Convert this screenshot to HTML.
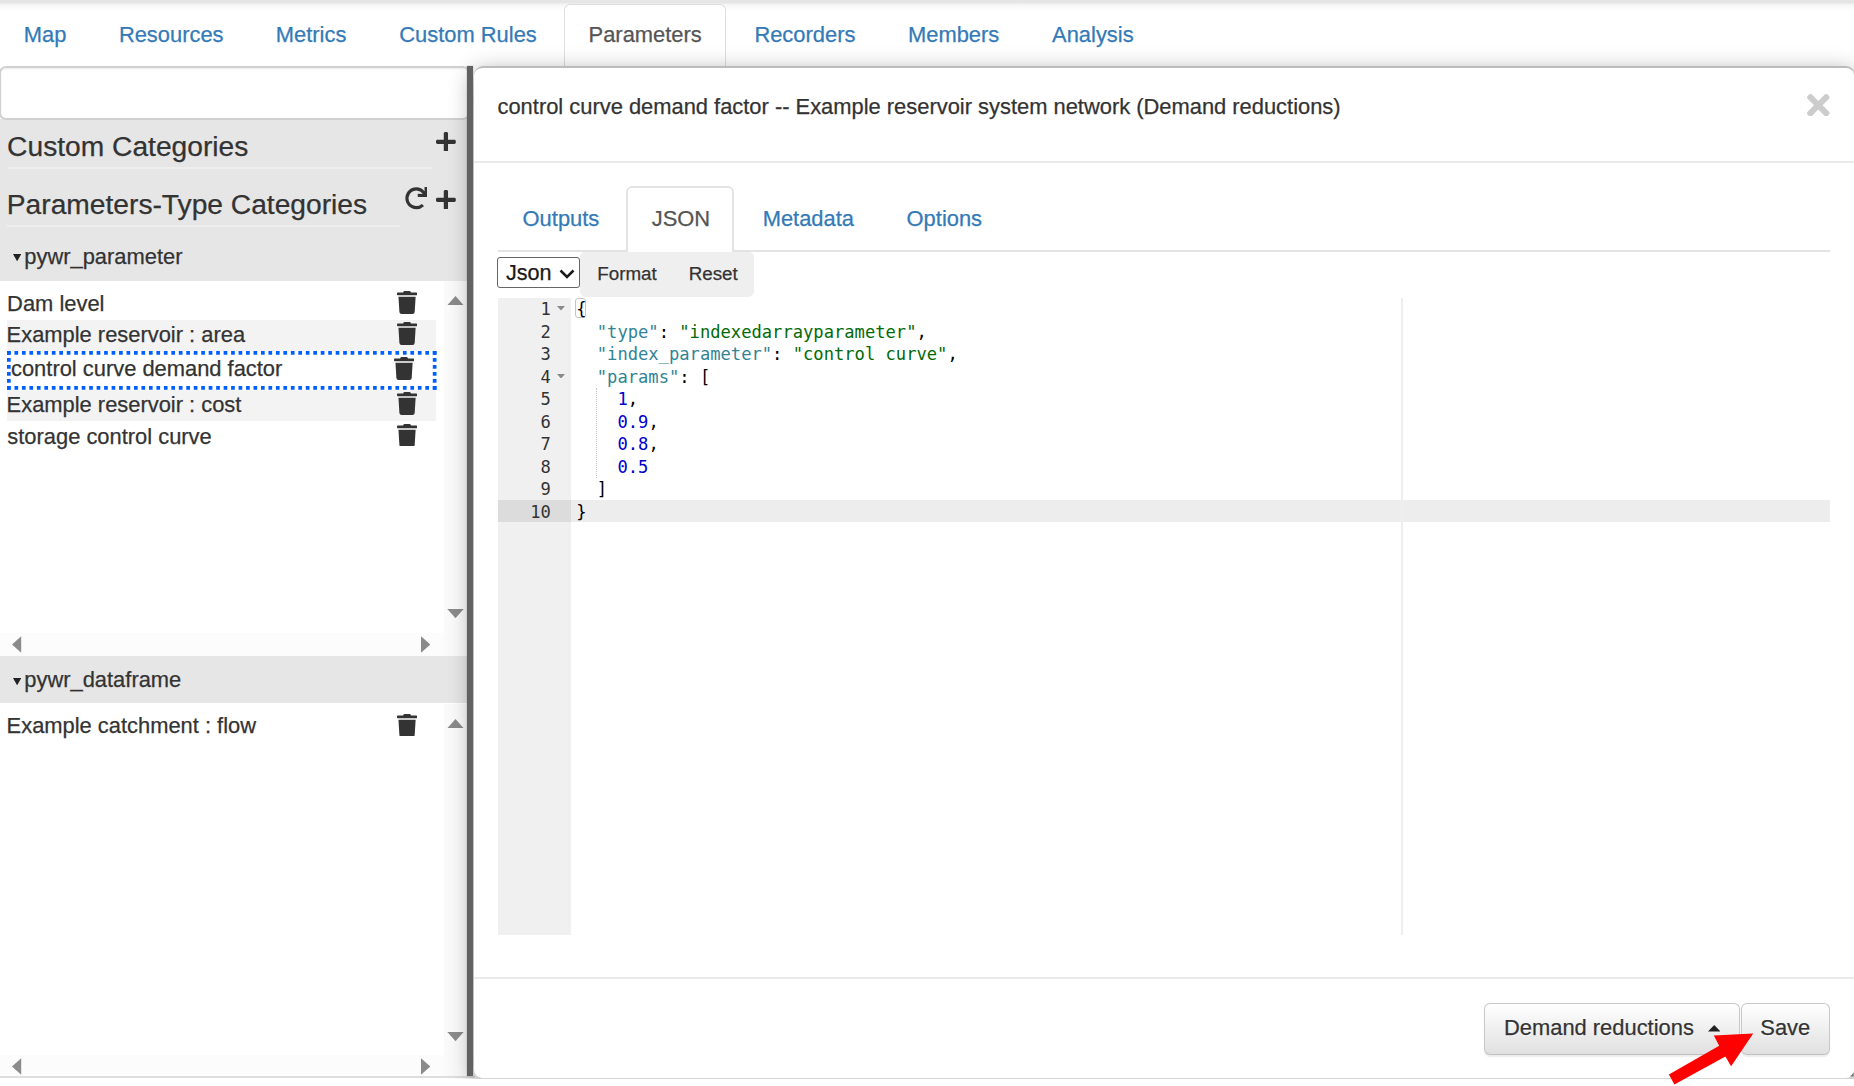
<!DOCTYPE html>
<html lang="en">
<head>
<meta charset="utf-8">
<title>Parameters</title>
<style>
*{box-sizing:border-box;margin:0;padding:0}
html,body{width:1854px;height:1086px;overflow:hidden;background:#fff}
body{position:relative;font-family:"Liberation Sans",sans-serif;font-size:21.9px;color:#333}
.a{position:absolute;white-space:nowrap}
.t{position:absolute;white-space:nowrap;line-height:30px;height:30px;-webkit-text-stroke:0.25px currentColor}
.lnk{color:#337ab7}
/* top strip */
#strip{left:0;top:0;width:1854px;height:13px;background:linear-gradient(to bottom,#e6e6e6 0,#e5e5e5 2.5px,#f5f5f5 4.5px,#fafafa 7px,#fff 12px)}
/* nav */
#navactive{left:563.8px;top:3.8px;width:161.8px;height:65px;border:1.9px solid #dedede;border-bottom:none;border-radius:6px 6px 0 0;background:#fff}
/* left panel */
#search{left:-1.5px;top:66px;width:471px;height:54.4px;border:2px solid #d0d0d0;border-radius:7px;background:#fff;box-shadow:inset 0 1px 2px rgba(0,0,0,.075)}
#graytop{left:0;top:119px;width:468px;height:162px;background:#e6e6e6}
.hline{height:1.5px;background:#eee}
#gray2{left:0;top:656.3px;width:468px;height:47.2px;background:#e6e6e6}
.row{left:7px;width:429.3px;height:31.4px}
.alt{background:#f3f3f3}
.hs{left:0;width:443.5px;height:23.5px;background:#fcfcfc}
#split{left:467.4px;top:66.2px;width:6px;height:1010.1px;background:#626262;box-shadow:0 0 .8px #626262}
#lbottom{left:0;top:1076.3px;width:475px;height:2.2px;background:#dedede}
/* modal */
#modal{left:473.5px;top:65.7px;width:1381px;height:1012.9px;background:#fff;border-top:2.1px solid #bcbcbc;border-bottom:1.8px solid #d4d4d4;border-right:1px solid #c8c8c8;border-radius:9px;box-shadow:0 7px 24px rgba(0,0,0,.42)}
.hr{height:2px;background:#ebebeb}
#tabactive{left:625.8px;top:186px;width:108.4px;height:66px;border:2px solid #e4e4e4;border-bottom:none;border-radius:6px 6px 0 0;background:#fff}
#sel{left:497.2px;top:257.3px;width:83px;height:30.5px;border:1.6px solid #666;border-radius:3px;background:#fff}
#tools{left:580.3px;top:251.5px;width:173.4px;height:45.2px;background:#efefef;border-radius:5px 5px 6px 6px}
.sm{font-size:18.8px}
/* editor */
#gutter{left:497.7px;top:297.7px;width:73.6px;height:637.4px;background:#f0f0f0}
#actg{left:497.7px;top:500.2px;width:73.6px;height:22.3px;background:#dcdcdc}
#actl{left:571.3px;top:500.2px;width:1258.7px;height:22.3px;background:#ededed}
#pm{left:1401px;top:297.7px;width:2px;height:637.4px;background:#eee}
.mono{font-family:"DejaVu Sans Mono","Liberation Mono",monospace;font-size:17.14px;line-height:22.5px;white-space:pre;position:absolute;color:#000}
.num{color:#333;text-align:right;width:60px}
.k{color:#318495}.s{color:#036a07}.n{color:#0000cd}
/* buttons */
.btn{border:1.8px solid #c8c8c8;border-bottom-color:#c0c0c0;border-radius:6px;background:linear-gradient(to bottom,#fff 0,#e0e0e0 100%);box-shadow:0 1.5px 1.5px rgba(0,0,0,.075);text-shadow:0 1px 0 #fff}
</style>
</head>
<body>
<div id="strip" class="a"></div>

<!-- top navigation tabs -->
<div id="navactive" class="a"></div>
<div class="t lnk" style="left:23.8px;top:20.3px">Map</div>
<div class="t lnk" style="left:118.9px;top:20.3px">Resources</div>
<div class="t lnk" style="left:275.8px;top:20.3px">Metrics</div>
<div class="t lnk" style="left:399.3px;top:20.3px">Custom Rules</div>
<div class="t" style="left:588.6px;top:20.3px;color:#555">Parameters</div>
<div class="t lnk" style="left:754.4px;top:20.3px">Recorders</div>
<div class="t lnk" style="left:908.0px;top:20.3px">Members</div>
<div class="t lnk" style="left:1052.1px;top:20.3px">Analysis</div>

<!-- left panel -->
<div id="graytop" class="a"></div>
<div id="search" class="a"></div>
<div class="t" style="left:7.1px;top:126.0px;font-size:28.2px;line-height:40px;height:40px">Custom Categories</div>
<div class="a hline" style="left:7px;top:167.3px;width:424.5px"></div>
<div class="t" style="left:6.8px;top:183.5px;font-size:28.2px;line-height:40px;height:40px">Parameters-Type Categories</div>
<div class="a hline" style="left:7px;top:225px;width:393px"></div>
<div class="t" style="left:24.3px;top:241.5px">pywr_parameter</div>
<svg class="a" style="left:13px;top:254.1px" width="8.3" height="7.4" viewBox="0 0 8 7"><path d="M0 0h8L4 7z" fill="#222"/></svg>

<!-- plus / refresh icons -->
<svg class="a" style="left:436.4px;top:131.7px" width="19.8" height="19.8" viewBox="0 32 448 448"><path fill="#333" d="M416 208H272V64c0-17.67-14.33-32-32-32h-32c-17.67 0-32 14.33-32 32v144H32c-17.67 0-32 14.330-32 32v32c0 17.67 14.33 32 32 32h144v144c0 17.67 14.33 32 32 32h32c17.67 0 32-14.33 32-32V304h144c17.67 0 32-14.33 32-32v-32c0-17.67-14.33-32-32-32z"/></svg>
<svg class="a" style="left:436.4px;top:189.7px" width="19.8" height="19.8" viewBox="0 32 448 448"><path fill="#333" d="M416 208H272V64c0-17.67-14.33-32-32-32h-32c-17.67 0-32 14.33-32 32v144H32c-17.67 0-32 14.330-32 32v32c0 17.67 14.33 32 32 32h144v144c0 17.67 14.33 32 32 32h32c17.67 0 32-14.33 32-32V304h144c17.67 0 32-14.33 32-32v-32c0-17.67-14.33-32-32-32z"/></svg>
<svg class="a" style="left:404.9px;top:187.4px" width="22.6" height="22.6" viewBox="0 0 512 512"><path fill="#333" d="M500.33 0h-47.41a12 12 0 0 0-12 12.570l4 82.760A247.420 247.420 0 0 0 256 8C119.340 8 7.900 119.530 8 256.190 8.100 393.070 119.100 504 256 504a247.100 247.100 0 0 0 166.180-63.910 12 12 0 0 0 .48-17.430l-34-34a12 12 0 0 0-16.380-.55A176 176 0 1 1 402.100 157.800l-101.530-4.870a12 12 0 0 0-12.570 12v47.410a12 12 0 0 0 12 12h200.330a12 12 0 0 0 12-12V12a12 12 0 0 0-12-12z"/></svg>

<!-- list 1 -->
<div class="a row" style="top:288.7px"></div>
<div class="a row alt" style="top:320px"></div>
<div class="a row alt" style="top:389.8px"></div>
<svg class="a" style="left:7px;top:351px" width="430" height="39" viewBox="0 0 430 39"><g fill="none" stroke="#0060ff" stroke-width="3.7"><path d="M0 1.850H429.500M0 36.850H429.500" stroke-dasharray="3.700 3.770"/><path d="M1.850 0V38.700M427.650 0V38.700" stroke-dasharray="3.700 3.300"/></g></svg>
<div class="t" style="left:7.1px;top:289.0px">Dam level</div>
<div class="t" style="left:6.6px;top:320.3px">Example reservoir : area</div>
<div class="t" style="left:11.0px;top:354.4px">control curve demand factor</div>
<div class="t" style="left:6.6px;top:390.1px">Example reservoir : cost</div>
<div class="t" style="left:7.3px;top:421.5px">storage control curve</div>

<!-- list 1 scrollbars -->
<div class="a" style="left:443.5px;top:281px;width:24px;height:375.3px;background:#fafafa"></div>
<div class="a" style="left:443.5px;top:703.5px;width:24px;height:373px;background:#fafafa"></div>
<div class="a hs" style="top:632.5px;height:23.8px"></div>
<svg class="a" style="left:447.1px;top:296px" width="17" height="9.2" viewBox="0 0 16 9"><path d="M0 9L8 0l8 9z" fill="#8b8b8b"/></svg>
<svg class="a" style="left:447.1px;top:609px" width="17" height="9.2" viewBox="0 0 16 9"><path d="M0 0h16L8 9z" fill="#8b8b8b"/></svg>
<svg class="a" style="left:12.4px;top:636.1px" width="9.2" height="17" viewBox="0 0 9 16"><path d="M9 0v16L0 8z" fill="#8b8b8b"/></svg>
<svg class="a" style="left:420.8px;top:636.1px" width="9.2" height="17" viewBox="0 0 9 16"><path d="M0 0v16l9-8z" fill="#8b8b8b"/></svg>

<!-- section 2 -->
<div id="gray2" class="a"></div>
<div class="t" style="left:24.3px;top:665.2px">pywr_dataframe</div>
<svg class="a" style="left:13px;top:677.8px" width="8.3" height="7.4" viewBox="0 0 8 7"><path d="M0 0h8L4 7z" fill="#222"/></svg>
<div class="t" style="left:6.6px;top:710.8px">Example catchment : flow</div>
<div class="a hs" style="top:1055px;height:21.5px"></div>
<svg class="a" style="left:447.1px;top:719.2px" width="17" height="9.2" viewBox="0 0 16 9"><path d="M0 9L8 0l8 9z" fill="#8b8b8b"/></svg>
<svg class="a" style="left:447.1px;top:1031.6px" width="17" height="9.2" viewBox="0 0 16 9"><path d="M0 0h16L8 9z" fill="#8b8b8b"/></svg>
<svg class="a" style="left:12.4px;top:1058.3px" width="9.2" height="17" viewBox="0 0 9 16"><path d="M9 0v16L0 8z" fill="#8b8b8b"/></svg>
<svg class="a" style="left:420.8px;top:1058.3px" width="9.2" height="17" viewBox="0 0 9 16"><path d="M0 0v16l9-8z" fill="#8b8b8b"/></svg>

<!-- trash icons -->
<svg class="a" style="left:397.2px;top:291px" width="20.1" height="22.9" viewBox="0 0 448 512"><path fill="#333" d="M432 32H312l-9.400-18.700A24 24 0 0 0 281.100 0H166.800a23.720 23.720 0 0 0-21.400 13.300L136 32H16A16 16 0 0 0 0 48v32a16 16 0 0 0 16 16h416a16 16 0 0 0 16-16V48a16 16 0 0 0-16-16zM53.200 467a48 48 0 0 0 47.900 45h245.800a48 48 0 0 0 47.900-45L416 128H32z"/></svg>
<svg class="a" style="left:397.2px;top:322.3px" width="20.1" height="22.9" viewBox="0 0 448 512"><path fill="#333" d="M432 32H312l-9.400-18.700A24 24 0 0 0 281.100 0H166.800a23.720 23.720 0 0 0-21.400 13.300L136 32H16A16 16 0 0 0 0 48v32a16 16 0 0 0 16 16h416a16 16 0 0 0 16-16V48a16 16 0 0 0-16-16zM53.200 467a48 48 0 0 0 47.900 45h245.800a48 48 0 0 0 47.900-45L416 128H32z"/></svg>
<svg class="a" style="left:393.6px;top:357.4px" width="20.1" height="22.9" viewBox="0 0 448 512"><path fill="#333" d="M432 32H312l-9.400-18.700A24 24 0 0 0 281.100 0H166.800a23.720 23.720 0 0 0-21.400 13.300L136 32H16A16 16 0 0 0 0 48v32a16 16 0 0 0 16 16h416a16 16 0 0 0 16-16V48a16 16 0 0 0-16-16zM53.200 467a48 48 0 0 0 47.900 45h245.800a48 48 0 0 0 47.900-45L416 128H32z"/></svg>
<svg class="a" style="left:397.2px;top:392.1px" width="20.1" height="22.9" viewBox="0 0 448 512"><path fill="#333" d="M432 32H312l-9.400-18.700A24 24 0 0 0 281.100 0H166.800a23.720 23.720 0 0 0-21.400 13.300L136 32H16A16 16 0 0 0 0 48v32a16 16 0 0 0 16 16h416a16 16 0 0 0 16-16V48a16 16 0 0 0-16-16zM53.200 467a48 48 0 0 0 47.900 45h245.800a48 48 0 0 0 47.900-45L416 128H32z"/></svg>
<svg class="a" style="left:397.2px;top:423.5px" width="20.1" height="22.9" viewBox="0 0 448 512"><path fill="#333" d="M432 32H312l-9.400-18.700A24 24 0 0 0 281.100 0H166.800a23.720 23.720 0 0 0-21.400 13.300L136 32H16A16 16 0 0 0 0 48v32a16 16 0 0 0 16 16h416a16 16 0 0 0 16-16V48a16 16 0 0 0-16-16zM53.200 467a48 48 0 0 0 47.900 45h245.800a48 48 0 0 0 47.900-45L416 128H32z"/></svg>
<svg class="a" style="left:397.2px;top:713.5px" width="20.1" height="22.9" viewBox="0 0 448 512"><path fill="#333" d="M432 32H312l-9.400-18.700A24 24 0 0 0 281.100 0H166.800a23.720 23.720 0 0 0-21.400 13.300L136 32H16A16 16 0 0 0 0 48v32a16 16 0 0 0 16 16h416a16 16 0 0 0 16-16V48a16 16 0 0 0-16-16zM53.200 467a48 48 0 0 0 47.900 45h245.800a48 48 0 0 0 47.900-45L416 128H32z"/></svg>

<div id="lbottom" class="a"></div>

<!-- modal -->
<div class="a" style="left:0;top:0;width:1854px;height:1078.6px;overflow:hidden"><div id="modal" class="a"></div></div>
<div id="split" class="a"></div>
<div class="t" style="left:497.5px;top:92.0px">control curve demand factor -- Example reservoir system network (Demand reductions)</div>
<svg class="a" style="left:1807.3px;top:93.8px" width="22.6" height="22.6" viewBox="0 80 352 352"><path fill="#ccc" d="M242.720 256l100.070-100.070c12.280-12.280 12.280-32.190 0-44.480l-22.240-22.240c-12.280-12.280-32.190-12.280-44.480 0L176 189.280 75.930 89.210c-12.280-12.280-32.190-12.280-44.480 0L9.210 111.450c-12.280 12.280-12.280 32.190 0 44.480L109.280 256 9.210 356.070c-12.280 12.280-12.280 32.190 0 44.480l22.240 22.240c12.280 12.280 32.200 12.280 44.480 0L176 322.720l100.070 100.070c12.280 12.280 32.200 12.280 44.480 0l22.240-22.240c12.280-12.280 12.280-32.190 0-44.480L242.720 256z"/></svg>
<div class="a hr" style="left:474px;top:161px;width:1380px"></div>

<!-- inner tabs -->
<div class="a" style="left:497.5px;top:249.6px;width:1332.5px;height:2px;background:#e3e3e3"></div>
<div id="tabactive" class="a"></div>
<div class="t lnk" style="left:522.6px;top:204.0px">Outputs</div>
<div class="t" style="left:651.8px;top:204.0px;color:#555">JSON</div>
<div class="t lnk" style="left:762.7px;top:204.0px">Metadata</div>
<div class="t lnk" style="left:906.6px;top:204.0px">Options</div>

<!-- toolbar -->
<div id="tools" class="a"></div>
<div id="sel" class="a"></div>
<div class="t" style="left:505.9px;top:257.6px;color:#1a1a1a;font-size:21.6px">Json</div>
<svg class="a" style="left:558.5px;top:269px" width="16" height="10" viewBox="0 0 16 10"><path d="M1.5 1.500L8 8l6.500-6.500" fill="none" stroke="#1a1a1a" stroke-width="2.500"/></svg>
<div class="t sm" style="left:597.3px;top:258.7px">Format</div>
<div class="t sm" style="left:688.7px;top:258.7px">Reset</div>

<!-- editor -->
<div id="gutter" class="a"></div>
<div id="actg" class="a"></div>
<div id="actl" class="a"></div>
<div id="pm" class="a"></div>
<div class="a" style="left:595.6px;top:387.7px;width:0;height:90px;border-left:1.2px dotted #c4c4c4"></div>
<div class="a" style="left:575.4px;top:297.6px;width:10.6px;height:20.6px;border:1.2px solid #c4c4c4;border-radius:3px"></div>
<div class="mono num" style="left:490.8px;top:298.2px">1
2
3
4
5
6
7
8
9
10</div>
<svg class="a" style="left:557.3px;top:306.2px" width="8" height="4.6" viewBox="0 0 8 4.600"><path d="M0 0h8L4 4.600z" fill="#8a8a8a"/></svg>
<svg class="a" style="left:557.3px;top:373.7px" width="8" height="4.6" viewBox="0 0 8 4.600"><path d="M0 0h8L4 4.600z" fill="#8a8a8a"/></svg>
<div class="mono" id="code" style="left:576.2px;top:298.2px">{
  <span class="k">"type"</span>: <span class="s">"indexedarrayparameter"</span>,
  <span class="k">"index_parameter"</span>: <span class="s">"control curve"</span>,
  <span class="k">"params"</span>: [
    <span class="n">1</span>,
    <span class="n">0.9</span>,
    <span class="n">0.8</span>,
    <span class="n">0.5</span>
  ]
}</div>

<!-- footer -->
<div class="a hr" style="left:474px;top:977.4px;width:1380px"></div>
<div class="a btn" style="left:1483.6px;top:1002.5px;width:256.3px;height:52.6px"></div>
<div class="a btn" style="left:1740.5px;top:1002.5px;width:89.6px;height:52.6px"></div>
<div class="t" style="left:1504.0px;top:1012.9px;text-shadow:0 1px 0 #fff">Demand reductions</div>
<svg class="a" style="left:1707.7px;top:1025.2px" width="12.5" height="6.5" viewBox="0 0 12.500 6.500"><path d="M0 6.500h12.500L6.250 0z" fill="#222"/></svg>
<div class="t" style="left:1760.3px;top:1012.9px;text-shadow:0 1px 0 #fff">Save</div>
<svg class="a" style="left:1850.3px;top:1072.3px" width="3.7" height="4.7" viewBox="0 0 6 7"><path d="M0 7L6 1v6z" fill="#777"/></svg>

<!-- red arrow annotation -->
<svg class="a" style="left:1640px;top:1000px" width="214" height="86" viewBox="1640 1000 214 86"><polygon fill="#ff0000" points="1753.2,1033.600 1713.8,1035.600 1719.2,1045.800 1668.9,1074.400 1674.4,1084.600 1725.4,1056.600 1731.1,1066.300"/></svg>
</body>
</html>
